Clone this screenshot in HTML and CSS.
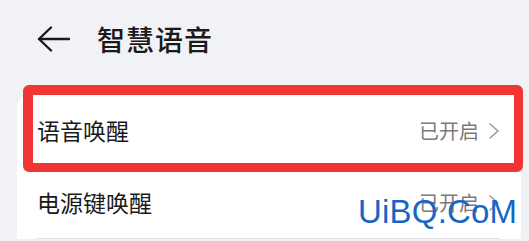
FILE: index.html
```html
<!DOCTYPE html>
<html>
<head>
<meta charset="utf-8">
<link rel="stylesheet" href="styles.css">
</head>
<body>
<div class="page">
  <header class="header">
    <svg class="back" width="34" height="28" viewBox="0 0 34 28">
      <path d="M3 14 H33 M15 2.5 L3 14 L15 25.5" fill="none" stroke="#1a1a1a" stroke-width="2.4" stroke-linecap="round" stroke-linejoin="round"/>
    </svg>
    <h1 class="title">智慧语音</h1>
  </header>
  <div class="card">
    <div class="row">
      <span class="label">语音唤醒</span>
      <span class="value">已开启
        <svg class="chev" width="12" height="18" viewBox="0 0 12 18"><path d="M2 2 L10 9 L2 16" fill="none" stroke="#9a9a9a" stroke-width="1.6" stroke-linecap="round" stroke-linejoin="round"/></svg>
      </span>
    </div>
    <div class="row last">
      <span class="label">电源键唤醒</span>
      <span class="value">已开启
        <svg class="chev" width="12" height="18" viewBox="0 0 12 18"><path d="M2 2 L10 9 L2 16" fill="none" stroke="#9a9a9a" stroke-width="1.6" stroke-linecap="round" stroke-linejoin="round"/></svg>
      </span>
    </div>
  </div>
  <div class="highlight"></div>
  <div class="watermark">UiBQ.CoM</div>
</div>
</body>
</html>
```
FILE: styles.css
```css
html, body {
  margin: 0;
  padding: 0;
  background: #f1f2f5;
  overflow: hidden;
}
.page {
  position: relative;
  width: 529px;
  height: 241px;
  font-family: "Noto Sans CJK SC", "Noto Sans", sans-serif;
}
.header {
  display: flex;
  align-items: center;
  height: 77px;
  padding-left: 36px;
  box-sizing: border-box;
}
.back {
  display: block;
  margin-top: 0px;
}
.title {
  margin: 0 0 0 27px;
  font-size: 28px;
  font-weight: 500;
  color: #1a1a1a;
  line-height: 1;
  letter-spacing: 1px;
}
.card {
  margin: 18px 8px 0 17px;
  background: #ffffff;
  border-radius: 12px 12px 0 0;
  padding: 0 21px 0 20px;
}
.row {
  display: flex;
  align-items: center;
  justify-content: space-between;
  height: 72px;
  border-bottom: 1px solid #e4e4e6;
  box-sizing: border-box;
}
.row.last {
  border-bottom: 1.5px solid #e2e2e4;
}
.label {
  font-size: 23px;
  color: #1a1a1a;
  line-height: 1;
}
.value {
  display: flex;
  align-items: center;
  gap: 9px;
  font-size: 20px;
  color: #7a7a7a;
  line-height: 1;
}
.chev {
  display: block;
}
.highlight {
  position: absolute;
  left: 23px;
  top: 85px;
  width: 500px;
  height: 87px;
  box-sizing: border-box;
  border: 10px solid #f03535;
  border-right-width: 9px;
  border-bottom-width: 9px;
  border-radius: 6px;
}
.watermark {
  position: absolute;
  left: 358px;
  top: 195px;
  font-family: "Liberation Sans", Arial, sans-serif;
  font-size: 33px;
  line-height: 1;
  color: #1766c6;
  letter-spacing: 0.2px;
}
```
